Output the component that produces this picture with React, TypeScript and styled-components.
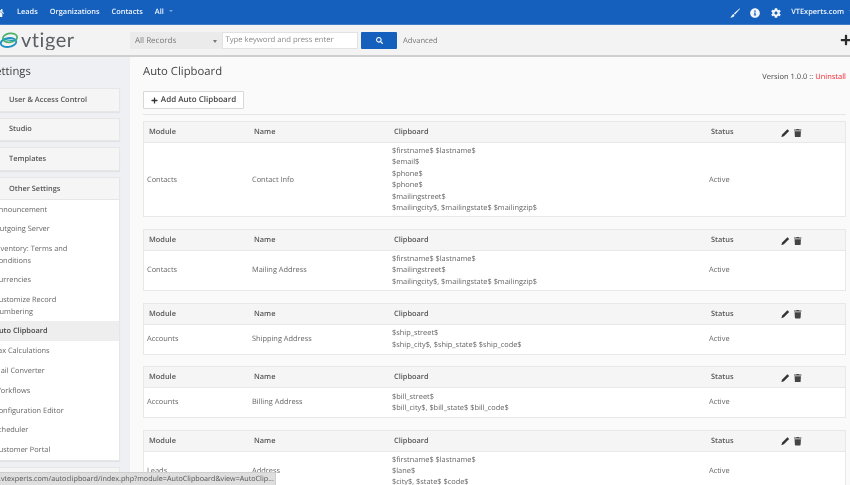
import React from "react";
import styled, { createGlobalStyle } from "styled-components";
import { FaCog, FaHome, FaInfoCircle, FaPlus, FaSearch, FaTrash } from "react-icons/fa";

const Global = createGlobalStyle`
  html, body { margin: 0; padding: 0; background: #fafafa; overflow: hidden; }
  * { box-sizing: border-box; }
`;

const Page = styled.div`
  position: relative;
  width: 850px;
  height: 485px;
  overflow: hidden;
  display: flex;
  flex-direction: column;
  background: #fafafa;
  color: #555;
  font-family: "Open Sans", "Liberation Sans", sans-serif;
  font-size: 7.4px;
  line-height: 11.4px;
  text-rendering: geometricPrecision;
  filter: blur(0.4px);
`;

const TopBar = styled.header`
  flex: none;
  height: 25px;
  padding-top: 1px;
  background: #1560bd;
  border-bottom: 1px solid #3d7cc9;
  display: flex;
  align-items: center;
  color: #f2f6fb;
  font-weight: 600;
  overflow: hidden;
`;
const HomeIcon = styled(FaHome)`
  width: 10px;
  height: 10px;
  margin-left: -6px;
  margin-right: 13px;
`;
const NavLink = styled.span`
  margin-right: 12px;
  white-space: nowrap;
`;
const Caret = styled.i`
  display: inline-block;
  width: 0;
  height: 0;
  margin-left: 5px;
  vertical-align: 2px;
  border-left: 2.5px solid transparent;
  border-right: 2.5px solid transparent;
  border-top: 2.5px solid #7fa8dc;
`;
const TopRight = styled.div`
  margin-left: auto;
  display: flex;
  align-items: center;
  margin-right: -15px;
`;
const TopIcon = styled.span`
  display: flex;
  margin-right: 10.5px;
  color: #f2f6fb;
  svg { width: 10px; height: 10px; }
`;

const SearchBar = styled.div`
  flex: none;
  height: 32px;
  background: #f3f3f3;
  border-bottom: 2px solid #cfcfcf;
  display: flex;
  align-items: center;
  position: relative;
`;
const Logo = styled.div`
  width: 130px;
  flex: none;
  display: flex;
  align-items: center;
  overflow: hidden;
`;
const LogoMark = styled.svg`
  width: 20px;
  height: 18px;
  margin-left: -1px;
  flex: none;
`;
const LogoText = styled.span`
  margin-left: 2px;
  font-family: "Lato", "Liberation Sans", sans-serif;
  font-size: 20px;
  line-height: 20px;
  letter-spacing: 0.55px;
  font-weight: 400;
  color: #5a5f63;
`;
const RecordSelect = styled.div`
  width: 92px;
  height: 17px;
  padding: 2px 5px 0;
  background: #ebebeb;
  color: #777;
  font-size: 8px;
  display: flex;
  align-items: center;
  justify-content: space-between;
`;
const SelectCaret = styled.i`
  width: 0;
  height: 0;
  border-left: 2px solid transparent;
  border-right: 2px solid transparent;
  border-top: 3px solid #777;
`;
const SearchInput = styled.div`
  width: 136px;
  height: 17px;
  background: #fff;
  border: 1px solid #e2e2e2;
  color: #8a8a8a;
  font-size: 7.7px;
  padding: 2px 2.5px 0;
  display: flex;
  align-items: center;
`;
const SearchButton = styled.div`
  width: 36px;
  height: 17px;
  margin-left: 3px;
  background: #1560bd;
  color: #fff;
  border-radius: 1px;
  display: flex;
  align-items: center;
  justify-content: center;
  svg { width: 7px; height: 7px; }
`;
const Advanced = styled.span`
  margin: 3px 0 0 6px;
  color: #777;
  font-size: 7.6px;
`;
const BigPlus = styled(FaPlus)`
  position: absolute;
  right: -2px;
  top: 9px;
  width: 12px;
  height: 12px;
  color: #2b2b2b;
`;

const Body = styled.div`
  flex: 1;
  min-height: 0;
  display: flex;
`;
const Sidebar = styled.aside`
  width: 130px;
  flex: none;
  background: #eef0f4;
  overflow: hidden;
  padding-right: 10px;
`;
const SideTitle = styled.h2`
  margin: 7px 0 8px -11px;
  font-size: 11.3px;
  line-height: 16px;
  font-weight: 400;
  color: #444;
`;
const SidePanel = styled.div`
  background: #f5f5f5;
  border: 1px solid #e6e6e6;
  border-left: 0;
  box-shadow: 0 1px 1px rgba(0, 0, 0, 0.05);
  margin-bottom: 6.2px;
`;
const SideHeader = styled.div`
  height: 21.5px;
  display: flex;
  align-items: center;
  padding: 1.5px 0 0 9px;
  color: #555;
  font-weight: 600;
`;
const SideList = styled.ul`
  list-style: none;
  margin: -1px 0 0;
  padding: 0;
  background: #fff;
  border-top: 1px solid #e6e6e6;
`;
const SideItem = styled.li<{ $active?: boolean }>`
  padding: 5px 10px 3.4px 0;
  background: ${(p) => (p.$active ? "#eeeeee" : "transparent")};
  color: ${(p) => (p.$active ? "#444" : "#666")};
  font-weight: ${(p) => (p.$active ? 600 : 400)};
  overflow: hidden;
  span { display: block; margin-left: -6px; }
`;

const Main = styled.main`
  flex: 1;
  min-width: 0;
  padding: 7px 4px 0 13px;
  overflow: hidden;
  background: #fafafa;
`;
const TitleRow = styled.div`
  display: flex;
  justify-content: space-between;
  align-items: flex-start;
  height: 27px;
`;
const Title = styled.h1`
  margin: 0;
  font-size: 11.3px;
  line-height: 16px;
  font-weight: 400;
  color: #444;
`;
const Version = styled.div`
  margin-top: 8px;
  color: #444;
  font-size: 7.5px;
`;
const Uninstall = styled.span`
  color: #f3232f;
`;
const AddButton = styled.div`
  width: 101px;
  height: 18px;
  background: #fff;
  border: 1px solid #d8d8d8;
  border-radius: 1px;
  color: #444;
  font-size: 8px;
  font-weight: 600;
  display: flex;
  align-items: center;
  justify-content: center;
  gap: 3px;
  svg { width: 7px; height: 7px; color: #333; }
`;
const Divider = styled.hr`
  margin: 5px 0 6px;
  border: 0;
  border-top: 1px solid #e6e6e6;
`;
const Table = styled.table`
  width: 100%;
  table-layout: fixed;
  border-collapse: separate;
  border-spacing: 0;
  background: #fff;
  border: 1px solid #e8e8e8;
  margin-bottom: 11.5px;
`;
const Th = styled.th<{ $w?: number }>`
  width: ${(p) => (p.$w ? `${p.$w}px` : "auto")};
  height: 21px;
  padding: 2px 5px 0;
  background: #f5f5f5;
  border-bottom: 1px solid #e8e8e8;
  text-align: left;
  font-weight: 600;
  color: #555;
`;
const Td = styled.td`
  padding: 3px 3px 2px;
  height: 29px;
  vertical-align: middle;
  color: #666;
`;
const ClipLine = styled.div`
  white-space: nowrap;
`;
const Actions = styled.div`
  display: flex;
  align-items: center;
  gap: 4.5px;
  color: #333;
`;
const PencilIcon = styled.svg`
  width: 8.5px;
  height: 8.5px;
  flex: none;
`;
const TrashIcon = styled(FaTrash)`
  width: 7.5px;
  height: 8.5px;
  flex: none;
  color: #444;
`;
const BrushIcon = styled.svg`
  width: 10px;
  height: 10px;
  display: block;
`;
const StatusBar = styled.div`
  position: absolute;
  left: 0;
  bottom: 0;
  width: 276px;
  height: 13px;
  background: #dedede;
  border-top: 1px solid #cfcfcf;
  border-right: 1px solid #cfcfcf;
  border-top-right-radius: 2px;
  color: #555;
  font-size: 7.2px;
  white-space: nowrap;
  overflow: hidden;
  line-height: 12px;
  span { display: block; margin-left: -1px; }
`;

const rows = [
  { module: "Contacts", name: "Contact Info", lines: ["$firstname$ $lastname$", "$email$", "$phone$", "$phone$", "$mailingstreet$", "$mailingcity$, $mailingstate$ $mailingzip$"] },
  { module: "Contacts", name: "Mailing Address", lines: ["$firstname$ $lastname$", "$mailingstreet$", "$mailingcity$, $mailingstate$ $mailingzip$"] },
  { module: "Accounts", name: "Shipping Address", lines: ["$ship_street$", "$ship_city$, $ship_state$ $ship_code$"] },
  { module: "Accounts", name: "Billing Address", lines: ["$bill_street$", "$bill_city$, $bill_state$ $bill_code$"] },
  { module: "Leads", name: "Address", lines: ["$firstname$ $lastname$", "$lane$", "$city$, $state$ $code$"] },
];

const items: { label: React.ReactNode; active?: boolean }[] = [
  { label: "Announcement" },
  { label: "Outgoing Server" },
  { label: <>Inventory: Terms and<br />Conditions</> },
  { label: "Currencies" },
  { label: <>Customize Record<br />Numbering</> },
  { label: "Auto Clipboard", active: true },
  { label: "Tax Calculations" },
  { label: "Mail Converter" },
  { label: "Workflows" },
  { label: "Configuration Editor" },
  { label: "Scheduler" },
  { label: "Customer Portal" },
];

export default function App() {
  return (
    <Page>
      <Global />
      <TopBar>
        <HomeIcon />
        <NavLink>Leads</NavLink>
        <NavLink>Organizations</NavLink>
        <NavLink>Contacts</NavLink>
        <NavLink>All<Caret /></NavLink>
        <TopRight>
          <TopIcon>
            <BrushIcon viewBox="0 0 10 10">
              <path d="M9.8 0.2 L9.9 0.9 L5 6.6 L3.8 5.5 Z M3.4 6 L4.5 7 C4.4 8.8 2.4 9.6 0.2 9.6 C1.6 8.8 1.8 6.8 3.4 6 Z" fill="currentColor" />
            </BrushIcon>
          </TopIcon>
          <TopIcon><FaInfoCircle /></TopIcon>
          <TopIcon><FaCog /></TopIcon>
          <NavLink>VTExperts.com<Caret /></NavLink>
        </TopRight>
      </TopBar>
      <SearchBar>
        <Logo>
          <LogoMark viewBox="0 0 20 18">
            <ellipse cx="9.5" cy="11.5" rx="7.8" ry="4.4" transform="rotate(-8 9.5 11.5)" fill="none" stroke="#1f8fc4" strokeWidth="1.8" />
            <ellipse cx="11" cy="6.8" rx="7.2" ry="4.4" transform="rotate(-8 11 6.8)" fill="none" stroke="#4eb26b" strokeWidth="1.8" />
            <path d="M3 9.5 C7 6.5 13 12 17.5 8.5" fill="none" stroke="#22a3b5" strokeWidth="1.4" />
          </LogoMark>
          <LogoText>vtiger</LogoText>
        </Logo>
        <RecordSelect>All Records<SelectCaret /></RecordSelect>
        <SearchInput>Type keyword and press enter</SearchInput>
        <SearchButton><FaSearch /></SearchButton>
        <Advanced>Advanced</Advanced>
        <BigPlus />
      </SearchBar>
      <Body>
        <Sidebar>
          <SideTitle>Settings</SideTitle>
          <SidePanel><SideHeader>User &amp; Access Control</SideHeader></SidePanel>
          <SidePanel><SideHeader>Studio</SideHeader></SidePanel>
          <SidePanel><SideHeader>Templates</SideHeader></SidePanel>
          <SidePanel>
            <SideHeader>Other Settings</SideHeader>
            <SideList>
              {items.map((it, i) => (
                <SideItem key={i} $active={it.active}><span>{it.label}</span></SideItem>
              ))}
            </SideList>
          </SidePanel>
          <SidePanel><SideHeader /></SidePanel>
        </Sidebar>
        <Main>
          <TitleRow>
            <Title>Auto Clipboard</Title>
            <Version>Version 1.0.0 :: <Uninstall>Uninstall</Uninstall></Version>
          </TitleRow>
          <AddButton><FaPlus />Add Auto Clipboard</AddButton>
          <Divider />
          {rows.map((r, i) => (
            <Table key={i}>
              <thead>
                <tr>
                  <Th $w={105}>Module</Th>
                  <Th $w={140}>Name</Th>
                  <Th $w={317}>Clipboard</Th>
                  <Th $w={70}>Status</Th>
                  <Th>
                    <Actions>
                      <PencilIcon viewBox="0 0 10 10">
                        <path d="M7.6 0.4 L9.6 2.4 L3.4 8.6 L0.4 9.6 L1.4 6.6 Z" fill="currentColor" />
                      </PencilIcon>
                      <TrashIcon />
                    </Actions>
                  </Th>
                </tr>
              </thead>
              <tbody>
                <tr>
                  <Td>{r.module}</Td>
                  <Td>{r.name}</Td>
                  <Td>{r.lines.map((l, j) => <ClipLine key={j}>{l}</ClipLine>)}</Td>
                  <Td>Active</Td>
                  <Td />
                </tr>
              </tbody>
            </Table>
          ))}
        </Main>
      </Body>
      <StatusBar><span>.vtexperts.com/autoclipboard/index.php?module=AutoClipboard&amp;view=AutoClip...</span></StatusBar>
    </Page>
  );
}
